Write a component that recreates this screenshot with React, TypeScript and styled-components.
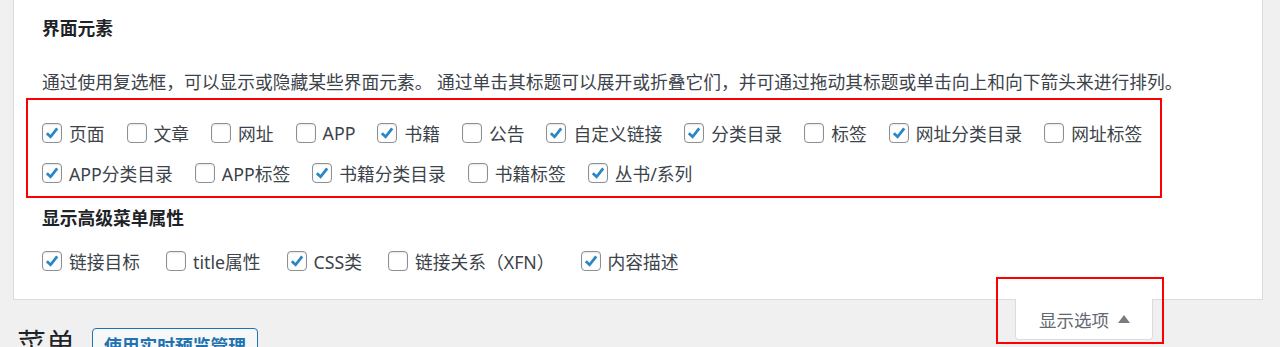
import styled, { createGlobalStyle } from "styled-components"

const GlobalStyle = createGlobalStyle`
    body {
        margin: 0;
        background: #f0f0f1;
        font-family: "Noto Sans", "Noto Sans CJK SC", sans-serif;
        color: #3c434a;
    }
`

const screenItems: [string, boolean][] = [
    ["页面", true],
    ["文章", false],
    ["网址", false],
    ["APP", false],
    ["书籍", true],
    ["公告", false],
    ["自定义链接", true],
    ["分类目录", true],
    ["标签", false],
    ["网址分类目录", true],
    ["网址标签", false],
    ["APP分类目录", true],
    ["APP标签", false],
    ["书籍分类目录", true],
    ["书籍标签", false],
    ["丛书/系列", true],
]

const advancedItems: [string, boolean][] = [
    ["链接目标", true],
    ["title属性", false],
    ["CSS类", true],
    ["链接关系（XFN）", false],
    ["内容描述", true],
]

const Check = ({ checked }: { checked: boolean }) => (
    <Box>
        {checked && (
            <svg viewBox="0 0 18 18" width="18" height="18">
                <path d="M3.8 9.2 L7.6 12.8 L14.2 4.4" fill="none" stroke="#2a86c6" strokeWidth="2.8" strokeLinejoin="miter" />
            </svg>
        )}
    </Box>
)

const App = () => {
    return (
        <Page>
            <GlobalStyle />
            <ScreenMeta>
                <Legend>界面元素</Legend>
                <Description>
                    通过使用复选框，可以显示或隐藏某些界面元素。 通过单击其标题可以展开或折叠它们，并可通过拖动其标题或单击向上和向下箭头来进行排列。
                </Description>
                <Prefs>
                    {screenItems.map(([label, checked]) => (
                        <Option key={label} $spacing={22}>
                            <Check checked={checked} />
                            <span>{label}</span>
                        </Option>
                    ))}
                </Prefs>
                <Legend $top={13}>显示高级菜单属性</Legend>
                <Prefs $top={11}>
                    {advancedItems.map(([label, checked]) => (
                        <Option key={label} $spacing={26}>
                            <Check checked={checked} />
                            <span>{label}</span>
                        </Option>
                    ))}
                </Prefs>
            </ScreenMeta>
            <Below>
                <TitleRow>
                    <Title>菜单</Title>
                    <ActionButton>使用实时预览管理</ActionButton>
                </TitleRow>
                <Tab>
                    显示选项
                    <svg width="12" height="8" viewBox="0 0 12 8">
                        <path d="M6 0 L12 8 L0 8 Z" fill="#787c82" />
                    </svg>
                </Tab>
            </Below>
            <Highlight $x={26} $y={98} $w={1136} $h={100} />
            <Highlight $x={996} $y={277} $w={168} $h={67} />
        </Page>
    )
}

export default App

const Page = styled.div`
    position: relative;
    padding: 0 17px 0 13px;
    height: 347px;
    overflow: hidden;
`

const ScreenMeta = styled.div`
    background: #fff;
    border: 1px solid #dcdcde;
    border-top: none;
    padding: 16px 28px 18px;
`

const Legend = styled.div<{ $top?: number }>`
    margin-top: ${p => p.$top ?? 0}px;
    font-size: 17.75px;
    line-height: 24px;
    font-weight: 700;
    color: #1d2327;
`

const Description = styled.p`
    margin: 30px 0 0;
    font-size: 17.75px;
    line-height: 24px;
    color: #3c434a;
`

const Prefs = styled.div<{ $top?: number }>`
    display: flex;
    flex-wrap: wrap;
    margin-top: ${p => p.$top ?? 19}px;
`

const Option = styled.label<{ $spacing: number }>`
    display: flex;
    align-items: center;
    gap: 7px;
    height: 40px;
    margin-right: ${p => p.$spacing}px;
    font-size: 17.75px;
    color: #3c434a;
`

const Box = styled.span`
    box-sizing: border-box;
    width: 20px;
    height: 20px;
    border: 1px solid #8c8f94;
    border-radius: 4px;
    background: #fff;
    box-shadow: inset 0 1px 2px rgba(0, 0, 0, 0.1);
    display: flex;
    align-items: center;
    justify-content: center;
`

const Below = styled.div`
    display: flex;
    justify-content: space-between;
    align-items: flex-start;
`

const TitleRow = styled.div`
    display: flex;
    align-items: flex-start;
    gap: 17px;
    margin-left: 4px;
    padding-top: 25px;
`

const Title = styled.h1`
    margin: 0;
    font-size: 29px;
    line-height: 37px;
    font-weight: 400;
    color: #1d2327;
`

const ActionButton = styled.button`
    margin-top: 3px;
    padding: 0 11px;
    font-family: inherit;
    font-size: 17.75px;
    line-height: 34px;
    font-weight: 600;
    color: #2271b1;
    background: #f6f7f7;
    border: 1px solid #2271b1;
    border-radius: 4px;
`

const Tab = styled.div`
    display: flex;
    align-items: center;
    gap: 9px;
    box-sizing: border-box;
    height: 41px;
    margin: -1px 110px 0 0;
    padding: 0 22px 0 23px;
    background: #fff;
    border: 1px solid #dcdcde;
    border-top: none;
    border-radius: 0 0 4px 4px;
    font-size: 17.5px;
    color: #646970;
`

const Highlight = styled.div<{ $x: number; $y: number; $w: number; $h: number }>`
    position: absolute;
    left: ${p => p.$x}px;
    top: ${p => p.$y}px;
    width: ${p => p.$w}px;
    height: ${p => p.$h}px;
    box-sizing: border-box;
    border: 2px solid #ff0000;
    pointer-events: none;
`
